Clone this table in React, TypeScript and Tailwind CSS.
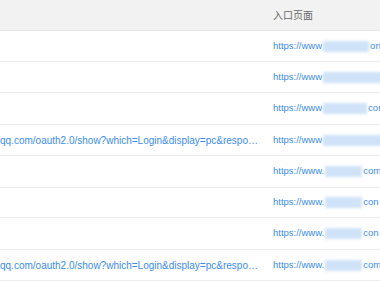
const rows = [
    { left: '', tail: 'on', gap: 'w-[46px]', dot: false, h: 'h-[31px]' },
    { left: '', tail: '', gap: 'w-[60px]', dot: false, h: 'h-[31px]' },
    { left: '', tail: 'com', gap: 'w-[44px]', dot: false, h: 'h-[32px]' },
    { left: 'qq.com/oauth2.0/show?which=Login&display=pc&respo…', tail: '', gap: 'w-[60px]', dot: false, h: 'h-[31px]' },
    { left: '', tail: 'com', gap: 'w-[37px]', dot: true, h: 'h-[32px]' },
    { left: '', tail: 'con', gap: 'w-[37px]', dot: true, h: 'h-[30px]' },
    { left: '', tail: 'con', gap: 'w-[37px]', dot: true, h: 'h-[32px]' },
    { left: 'qq.com/oauth2.0/show?which=Login&display=pc&respo…', tail: 'com', gap: 'w-[37px]', dot: true, h: 'h-[31px]' },
];

const App = () => {
    return (
        <div className="h-[282px] w-[380px] overflow-hidden bg-white font-['Liberation_Sans','Noto_Sans_CJK_SC',sans-serif] text-[9.5px]">
            <div className="flex h-[31px] items-center border-b border-[#e6e6e6] bg-[#f2f2f2] text-[#666]">
                <div className="w-[273px] shrink-0" />
                <div className="whitespace-nowrap text-[10px]">入口页面</div>
            </div>
            {rows.map((r, i) => (
                <div
                    key={i}
                    className={`${r.h} flex items-center border-b border-[#ececec] text-[#3b8ded]`}
                >
                    <div className="w-[273px] shrink-0 overflow-hidden whitespace-nowrap text-[10px]">
                        {r.left}
                    </div>
                    <div className="flex items-center whitespace-nowrap">
                        <span>{r.dot ? 'https://www.' : 'https://www'}</span>
                        <span
                            className={`${r.gap} mx-[1px] h-[11px] shrink-0 bg-[#cfe2f8] blur-[1.5px]`}
                        />
                        <span>{r.tail}</span>
                    </div>
                </div>
            ))}
        </div>
    );
};

export default App;
